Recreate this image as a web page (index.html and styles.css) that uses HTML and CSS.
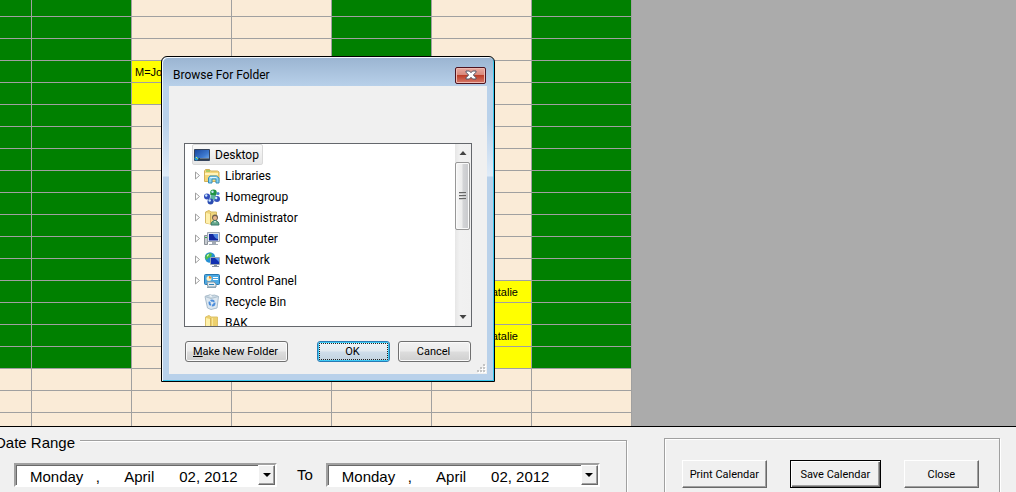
FILE: index.html
```html
<!DOCTYPE html>
<html lang="en">
<head>
<meta charset="utf-8">
<title>Calendar</title>
<link rel="stylesheet" href="styles.css">
</head>
<body>
<main class="calendar">
  <table class="grid" aria-label="Calendar">
    <colgroup><col class="narrow"><col><col><col><col><col><col></colgroup>
    <tbody>
      <tr class="short"><td class="off"></td><td class="off"></td><td></td><td></td><td class="off"></td><td></td><td class="off"></td></tr>
      <tr><td class="off"></td><td class="off"></td><td></td><td></td><td class="off"></td><td></td><td class="off"></td></tr>
      <tr><td class="off"></td><td class="off"></td><td></td><td></td><td class="off"></td><td></td><td class="off"></td></tr>
      <tr><td class="off"></td><td class="off"></td><td class="shift">M=Jo</td><td></td><td class="off"></td><td></td><td class="off"></td></tr>
      <tr><td class="off"></td><td class="off"></td><td class="shift"></td><td></td><td class="off"></td><td></td><td class="off"></td></tr>
      <tr><td class="off"></td><td class="off"></td><td></td><td></td><td class="off"></td><td></td><td class="off"></td></tr>
      <tr><td class="off"></td><td class="off"></td><td></td><td></td><td class="off"></td><td></td><td class="off"></td></tr>
      <tr><td class="off"></td><td class="off"></td><td></td><td></td><td class="off"></td><td></td><td class="off"></td></tr>
      <tr><td class="off"></td><td class="off"></td><td></td><td></td><td class="off"></td><td></td><td class="off"></td></tr>
      <tr><td class="off"></td><td class="off"></td><td></td><td></td><td class="off"></td><td></td><td class="off"></td></tr>
      <tr><td class="off"></td><td class="off"></td><td></td><td></td><td class="off"></td><td></td><td class="off"></td></tr>
      <tr><td class="off"></td><td class="off"></td><td></td><td></td><td class="off"></td><td></td><td class="off"></td></tr>
      <tr><td class="off"></td><td class="off"></td><td></td><td></td><td class="off"></td><td></td><td class="off"></td></tr>
      <tr><td class="off"></td><td class="off"></td><td></td><td></td><td class="off"></td><td class="shift end">Natalie</td><td class="off"></td></tr>
      <tr><td class="off"></td><td class="off"></td><td></td><td></td><td class="off"></td><td class="shift"></td><td class="off"></td></tr>
      <tr><td class="off"></td><td class="off"></td><td></td><td></td><td class="off"></td><td class="shift end">Natalie</td><td class="off"></td></tr>
      <tr><td class="off"></td><td class="off"></td><td></td><td></td><td class="off"></td><td class="shift"></td><td class="off"></td></tr>
      <tr><td></td><td></td><td></td><td></td><td></td><td></td><td></td></tr>
      <tr><td></td><td></td><td></td><td></td><td></td><td></td><td></td></tr>
      <tr><td></td><td></td><td></td><td></td><td></td><td></td><td></td></tr>
    </tbody>
  </table>
</main>

<footer class="controls">
  <fieldset class="group range">
    <legend>Date Range</legend>
    <div class="range-row">
      <div class="picker">
        <input type="text" aria-label="From date" value="Monday   ,      April      02, 2012">
        <button type="button" aria-label="Open from date calendar"><svg width="8" height="4" viewBox="0 0 8 4"><path d="M0 0h8L4 4z"/></svg></button>
      </div>
      <label class="to" for="to-date">To</label>
      <div class="picker wide">
        <input type="text" id="to-date" value="Monday   ,      April      02, 2012">
        <button type="button" aria-label="Open to date calendar"><svg width="8" height="4" viewBox="0 0 8 4"><path d="M0 0h8L4 4z"/></svg></button>
      </div>
    </div>
  </fieldset>
  <div class="group actions">
    <button type="button" class="classic print">Print Calendar</button>
    <button type="button" class="classic default">Save Calendar</button>
    <button type="button" class="classic close-form">Close</button>
  </div>
</footer>

<section class="dialog" role="dialog" aria-labelledby="dialog-title">
  <header class="titlebar">
    <h1 id="dialog-title">Browse For Folder</h1>
    <button type="button" class="close" aria-label="Close dialog">
      <svg width="12" height="10" viewBox="0 0 12 10"><path d="M1 1h3.4L6 2.7 7.6 1H11v1.2L8.4 5 11 7.8V9H7.6L6 7.3 4.4 9H1V7.8L3.6 5 1 2.2z" fill="#fff" stroke="#535666"/></svg>
    </button>
  </header>
  <div class="client">
    <div class="listbox">
      <ul class="tree">
        <li class="root"><span class="selected">
          <svg class="icon" viewBox="0 0 16 16"><defs><linearGradient id="desk" x2="1" y2="1"><stop stop-color="#17449a"/><stop offset=".6" stop-color="#3d79cf"/><stop offset="1" stop-color="#82b7ee"/></linearGradient></defs><path d="M.5 2.500h15v11H.5z" fill="url(#desk)" stroke="#34435b"/><path d="M1 11h14v2H1z" fill="#303d4d"/><path d="M6 11h9v1H6z" fill="#657587"/><circle cx="2.500" cy="11.500" r="2" fill="#2299d3"/><path d="M2 10h1v1H2z" fill="#ffdc4c"/><path d="M3 11h1v1H3z" fill="#9bdc62"/></svg>
          Desktop</span></li>
        <li><svg class="arrow" viewBox="0 0 7 9"><path d="M1.500 1v7l4-3.500z"/></svg>
          <svg class="icon" viewBox="0 0 16 16"><path d="M.5 3l1-1.500h4l1 1.500h7l1.500 1v9.500H.5z" fill="#f5d778" stroke="#d0b058"/><path d="M2 2.500h4v1H2z" fill="#65bd55"/><path d="M1 5h13v2H1z" fill="#fff4ba"/><path d="M4.500 15v-5l1.500-2h6.500l2.500 2v5h-3v-4h-4v4z" fill="#8bd2f0" stroke="#358fba"/><path d="M6.500 9h5.500l1 1H5.500z" fill="#e2f8ff"/></svg>
          Libraries</li>
        <li><svg class="arrow" viewBox="0 0 7 9"><path d="M1.500 1v7l4-3.500z"/></svg>
          <svg class="icon" viewBox="0 0 16 16"><path d="M3 8l6-4 5 6-6 3z" fill="#d4e6f4" stroke="#8cabc8"/><circle cx="9.500" cy="3.800" r="3.300" fill="#219443"/><circle cx="3" cy="7.500" r="3" fill="#304dbb"/><circle cx="13" cy="10" r="3" fill="#3452bc"/><circle cx="9" cy="8.500" r="2.500" fill="#5fb5a0"/><circle cx="6.500" cy="12.500" r="3" fill="#2a4bb1"/><circle cx="14" cy="4.500" r="1.500" fill="#4b83cd"/><g fill="#c8e8ff"><circle cx="8.500" cy="2.800" r="1.200"/><circle cx="2.200" cy="6.500" r="1.200"/><circle cx="12.200" cy="9" r="1.200"/><circle cx="5.700" cy="11.500" r="1.200"/></g></svg>
          Homegroup</li>
        <li><svg class="arrow" viewBox="0 0 7 9"><path d="M1.500 1v7l4-3.500z"/></svg>
          <svg class="icon" viewBox="0 0 16 16"><path d="M1.500 2L5 .5 7 2h5.500v12h-6l-5-1z" fill="#f0d67c" stroke="#d5b964"/><path d="M2 3l4 1v10l-4-1z" fill="#fff0ac"/><path d="M6.500 3v11" stroke="#d0b05d"/><circle cx="11" cy="7.500" r="3" fill="#70604f"/><circle cx="11" cy="8" r="2" fill="#e8b58b"/><path d="M7 15c0-6 8-6 8 0z" fill="#65a88c" stroke="#38796b"/><path d="M10 11h2l-1 2z" fill="#e7f3e6"/></svg>
          Administrator</li>
        <li><svg class="arrow" viewBox="0 0 7 9"><path d="M1.500 1v7l4-3.500z"/></svg>
          <svg class="icon" viewBox="0 0 16 16"><path d="M.5 4.500h3v9h-3z" fill="#c7cbd0" stroke="#8a9097"/><path d="M1 6h2v1H1z" fill="#37a947"/><path d="M3.500 1.500h12v9h-12z" fill="#dce4ee" stroke="#9ca5b0"/><path d="M5 3h9v6.500H5z" fill="#1229a0"/><path d="M9 3h5v5c-2 0-4-2-5-5z" fill="#5087e0"/><path d="M8 11h4v2h2v1H5v-1h3z" fill="#a2aab4"/></svg>
          Computer</li>
        <li><svg class="arrow" viewBox="0 0 7 9"><path d="M1.500 1v7l4-3.500z"/></svg>
          <svg class="icon" viewBox="0 0 16 16"><circle cx="6" cy="5.500" r="5.200" fill="#258fd4"/><path d="M2 3l4-2 2 1-1 3-3 1-1 2-2-2zm6 4l3-3v3z" fill="#50be4b"/><path d="M3 3l2-1v1L3 5z" fill="#d6f5bd"/><path d="M6.500 5.500h9v7h-9z" fill="#dce5ef" stroke="#9ba6b5"/><path d="M7 6h8v6H7z" fill="#1230b1"/><path d="M11 6h4v4z" fill="#5290ee"/><path d="M10 13h3v1h2v1H8v-1h2z" fill="#8993a1"/></svg>
          Network</li>
        <li><svg class="arrow" viewBox="0 0 7 9"><path d="M1.500 1v7l4-3.500z"/></svg>
          <svg class="icon" viewBox="0 0 16 16"><rect x=".5" y="1.500" width="15" height="10" rx="1" fill="#4ba8e3" stroke="#2679b1"/><circle cx="5" cy="5.500" r="2.500" fill="#fff2c3"/><path d="M5 5.500V3a2.500 2.500 0 0 1 2.500 2.500z" fill="#ed8a2b"/><path d="M9 4.500h5M9 6.500h5" stroke="#fff"/><path d="M3 9h7l2 2v3H4z" fill="#e7edf1" stroke="#8197a4"/><path d="M5 11.500h5" stroke="#2a83b6"/><path d="M3 14.500h9" stroke="#8aa5b5"/></svg>
          Control Panel</li>
        <li><span class="arrow"></span>
          <svg class="icon" viewBox="0 0 16 16"><path d="M1 2.500l5-1.500 8.500 1.500L13 14l-6 1.500L3.500 14z" fill="#dce7f0" stroke="#a9bccb"/><path d="M1 2.500l6 2 7.500-2-4-1.500-3 .5-2-.5z" fill="#c9d9e4" stroke="#b0c1ce"/><path d="M5 2l2-1 1 2z" fill="#fff"/><circle cx="8" cy="9" r="2.500" fill="none" stroke="#4b8ddb" stroke-width="2" stroke-dasharray="4 1"/></svg>
          Recycle Bin</li>
        <li><span class="arrow"></span>
          <svg class="icon" viewBox="0 0 16 16"><path d="M1.500 2L5 .5 7 2h6.500v12h-7l-5-1z" fill="#edd06d" stroke="#dcc26d"/><path d="M2 3l4 1v11l-4-2z" fill="#fff2ac"/><path d="M8 3h1v11H8z" fill="#f8e69c"/><path d="M6.500 3v12" stroke="#d4b55d"/></svg>
          BAK</li>
      </ul>
      <div class="scrollbar" aria-hidden="true">
        <svg class="step" viewBox="0 0 16 18"><path d="M4.500 11h7L8 7z" fill="#444"/></svg>
        <div class="thumb"><i></i><i></i><i></i></div>
        <svg class="step last" viewBox="0 0 16 18"><path d="M4.500 7h7L8 11z" fill="#444"/></svg>
      </div>
    </div>
    <div class="buttons">
      <button type="button" class="aero new-folder"><u>M</u>ake New Folder</button>
      <button type="button" class="aero ok">OK</button>
      <button type="button" class="aero">Cancel</button>
    </div>
    <svg class="grip" viewBox="0 0 9 9"><path d="M7 1h2v2H7zM4 4h2v2H4zM7 4h2v2H7zM1 7h2v2H1zM4 7h2v2H4zM7 7h2v2H7z" fill="#fff"/><path d="M6 0h2v2H6zM3 3h2v2H3zM6 3h2v2H6zM0 6h2v2H0zM3 6h2v2H3zM6 6h2v2H6z" fill="#c4c4c4"/></svg>
  </div>
</section>
</body>
</html>
```
FILE: styles.css
```css
* { box-sizing: border-box; }
body {
  margin: 0;
  height: 100vh;
  display: flex;
  flex-direction: column;
  overflow: hidden;
  background: #f0f0f0;
  color: #000;
  font-family: "Liberation Sans", Arial, sans-serif;
}
button, input { font: inherit; color: inherit; }
svg { display: block; flex: none; }

/* Calendar grid */
.calendar {
  flex: 1;
  min-height: 0;
  overflow: hidden;
  background: #ababab;
  border-bottom: 1px solid #000;
}
.grid {
  table-layout: fixed;
  width: 632px;
  border-spacing: 0;
  font-size: 11px;
  line-height: 13px;
}
.grid col { width: 100px; }
.grid .narrow { width: 32px; }
.grid td {
  height: 22px;
  padding: 2px 3px 0;
  background: #faebd7;
  border: solid #a0a0a0;
  border-width: 0 1px 1px 0;
  white-space: nowrap;
}
.grid .short td { height: 17px; }
.grid .off { background: #008000; }
.grid .shift { background: #ff0; }
.grid .end { text-align: right; padding-right: 13px; }

/* Bottom controls */
.controls {
  flex: 0 0 65px;
  display: flex;
  align-items: flex-start;
  gap: 37px;
  overflow: hidden;
}
.group {
  margin: 0;
  border: 1px solid #a0a0a0;
  box-shadow: 1px 1px #fff, inset 1px 1px #fff;
}
.range {
  flex: none;
  margin: 2px 0 0 -12px;
  padding: 0 26px 20px 25px;
  font-size: 15px;
  line-height: 16px;
}
.range legend {
  margin-left: -21px;
  padding: 6px 5px 0 2px;
  background: #f0f0f0;
}
.range-row {
  display: flex;
  align-items: center;
  gap: 20px;
  padding-top: 12px;
}
.picker {
  display: flex;
  width: 263px;
  height: 24px;
  background: #fff;
  border: 2px solid;
  border-color: #a0a0a0 #fff #fff #a0a0a0;
  box-shadow: inset 1px 1px #696969;
}
.picker.wide { width: 274px; }
.picker input {
  flex: 1;
  min-width: 0;
  padding: 4px 0 0 14px;
  border: 0;
  background: none;
  outline: 0;
}
.picker button {
  width: 17px;
  padding: 0;
  display: grid;
  place-items: center;
  background: #f0f0f0;
  border: 1px solid;
  border-color: #fff #696969 #696969 #fff;
  box-shadow: inset -1px -1px #a0a0a0;
}
.to { margin-right: -7px; }
.actions {
  display: flex;
  gap: 23px;
  margin-top: 11px;
  padding: 21px 20px 30px 17px;
}
.classic {
  height: 28px;
  padding: 0;
  background: #f0f0f0;
  border: 1px solid;
  border-color: #fff #696969 #696969 #fff;
  box-shadow: inset -1px -1px #a0a0a0;
  font-family: Roboto, sans-serif;
  font-size: 11px;
}
.print { width: 85px; }
.default {
  width: 91px;
  border-color: #000;
  box-shadow: inset 1px 1px #fff, inset -1px -1px #696969, inset -2px -2px #a0a0a0;
}
.close-form { width: 75px; }

/* Folder dialog */
.dialog {
  position: absolute;
  left: 161px;
  top: 56px;
  width: 334px;
  padding: 1px 7px 7px;
  border: 1px solid #000;
  border-radius: 6px 6px 0 0;
  background: linear-gradient(#9ab4d1 0, #b9d1ea 30px, #b9d1ea 65px, #dfebf8 119px, #b9d1ea 120px);
  box-shadow: inset 1px 1px #f2f8fd, inset -1px -1px #34c6ec;
  font-family: Roboto, "Open Sans", sans-serif;
  font-size: 12px;
  line-height: 16px;
}
.titlebar {
  display: flex;
  justify-content: space-between;
  align-items: center;
  height: 28px;
  padding: 6px 1px 0 4px;
}
.titlebar h1 { margin: 0; font-size: 12px; font-weight: 400; }
.close {
  display: grid;
  place-items: center;
  width: 31px;
  height: 17px;
  padding: 0;
  border: 1px solid #4e1420;
  border-radius: 2px;
  background: linear-gradient(#e8aaa0 0, #d88679 48%, #bd3e28 50%, #d6796a 100%);
  box-shadow: inset 0 0 0 1px #efb9b0;
}
.client {
  position: relative;
  padding: 57px 15px 12px;
  background: #f0f0f0;
}
.listbox {
  display: flex;
  height: 184px;
  border: 1px solid #64676c;
  background: #fff;
  overflow: hidden;
}
.tree {
  flex: 1;
  margin: 0;
  padding: 0 0 0 9px;
  list-style: none;
}
.tree li {
  display: flex;
  align-items: center;
  gap: 5px;
  height: 21px;
  white-space: nowrap;
}
.tree .root { margin-left: -2px; }
.selected {
  display: flex;
  align-items: center;
  gap: 5px;
  height: 21px;
  padding: 0 3px 0 1px;
  border: 1px solid #d9d9d9;
  border-radius: 2px;
  background: linear-gradient(#fafafa, #e6e6e6);
}
.icon { width: 16px; height: 16px; }
.arrow {
  width: 7px;
  height: 9px;
  margin-right: -2px;
  fill: #fff;
  stroke: #a0a0a0;
}
.scrollbar {
  display: flex;
  flex-direction: column;
  width: 16px;
  background: linear-gradient(90deg, #e6e6e6, #f1f1f1 30%, #f0f0f0);
}
.step { width: 16px; height: 18px; }
.last { margin-top: auto; }
.thumb {
  display: flex;
  flex-direction: column;
  align-items: center;
  justify-content: center;
  gap: 1px;
  width: 15px;
  height: 68px;
  border: 1px solid #979797;
  border-radius: 2px;
  background: linear-gradient(90deg, #f6f6f6, #ececec 48%, #d4d5d7 52%, #c8c9cc);
  box-shadow: inset 0 0 0 1px #fafafa;
}
.thumb i { width: 7px; height: 2px; background: #666; border-bottom: 1px solid #ccc; }
.buttons { display: flex; gap: 8px; padding: 14px 0 0 1px; }
.aero {
  width: 73px;
  height: 21px;
  padding: 0 2px 0 0;
  border: 1px solid #707070;
  border-radius: 3px;
  background: linear-gradient(#f2f2f2, #ebebeb 48%, #dddddd 52%, #cfcfcf);
  box-shadow: inset 0 0 0 1px #fafafa;
  font-size: 11px;
  line-height: 15px;
}
.new-folder { width: 103px; margin-right: 21px; }
.ok {
  border-color: #2a7ab5;
  background: linear-gradient(#eff4f7, #e2eaf0 48%, #ceddea 52%, #c2d3df);
  box-shadow: inset 0 0 0 1px #3dcbf5;
  outline: 1px dotted #222;
  outline-offset: -3px;
}
.grip {
  position: absolute;
  right: 1px;
  bottom: 1px;
  width: 9px;
  height: 9px;
}
```
